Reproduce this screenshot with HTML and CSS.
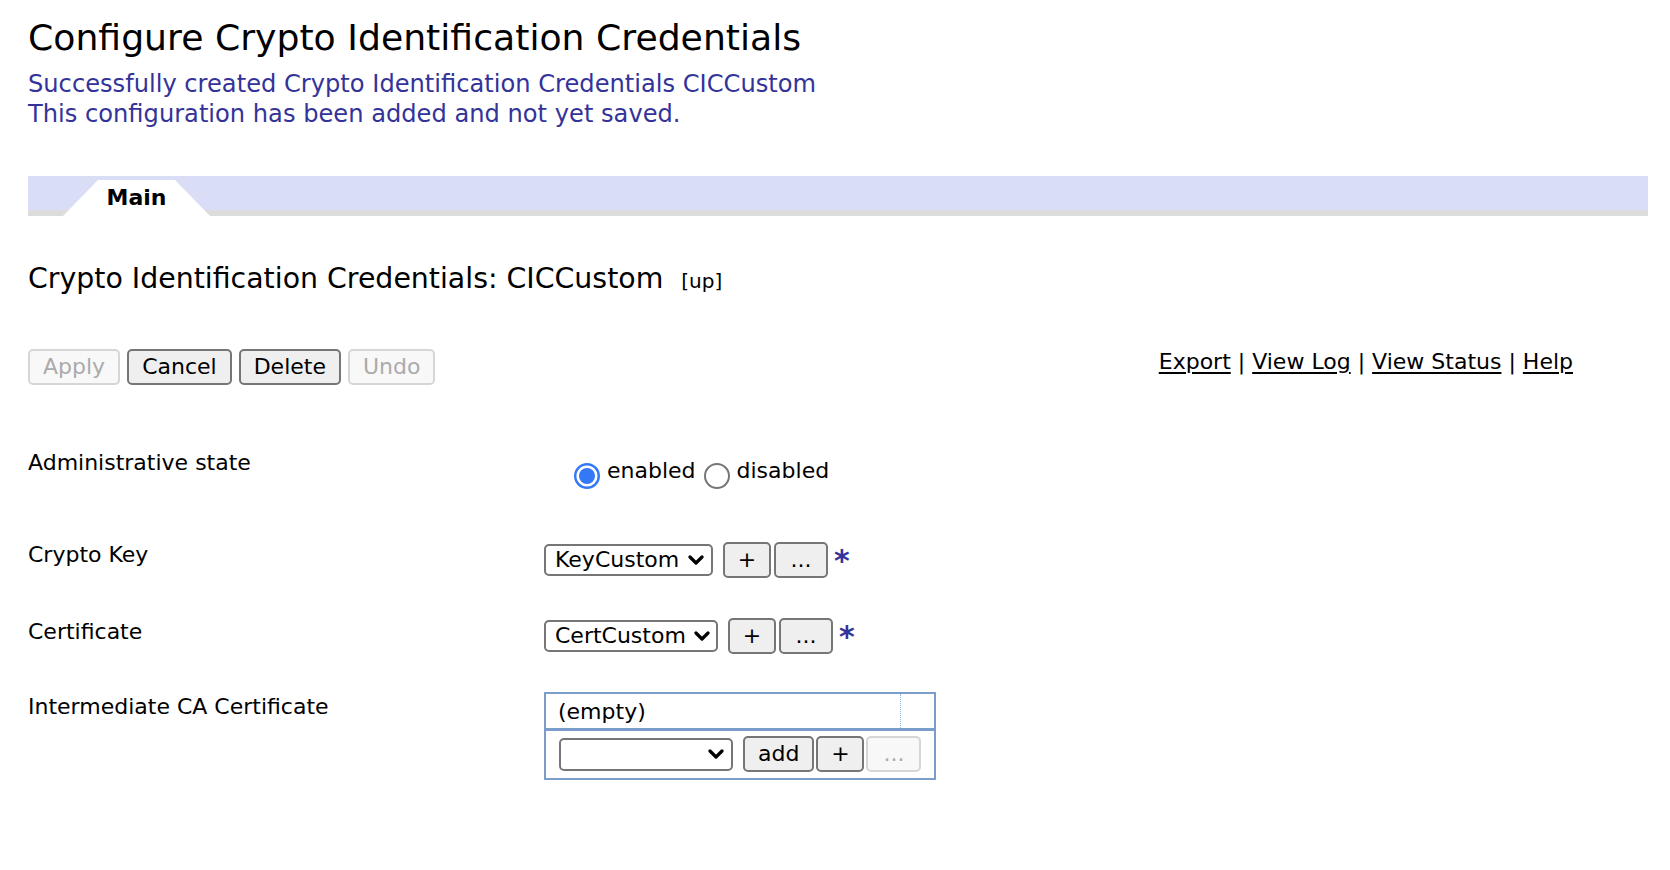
FILE: index.html
```html
<!DOCTYPE html>
<html lang="en">
<head>
<meta charset="utf-8">
<title>Configure Crypto Identification Credentials</title>
<link rel="stylesheet" href="styles.css">
</head>
<body>
<div class="page">
  <h1 class="title">Configure Crypto Identification Credentials</h1>
  <div class="msgs">
    <div>Successfully created Crypto Identification Credentials CICCustom</div>
    <div>This configuration has been added and not yet saved.</div>
  </div>

  <div class="tabbar">
    <div class="tab">Main</div>
  </div>

  <h2 class="heading">Crypto Identification Credentials: CICCustom<span class="up">[up]</span></h2>

  <div class="toolbar">
    <div class="btns">
      <button class="btn btn-disabled" disabled>Apply</button>
      <button class="btn">Cancel</button>
      <button class="btn">Delete</button>
      <button class="btn btn-disabled" disabled>Undo</button>
    </div>
    <div class="links">
      <a href="#">Export</a><span class="sep">|</span><a href="#">View Log</a><span class="sep">|</span><a href="#">View Status</a><span class="sep">|</span><a href="#">Help</a>
    </div>
  </div>

  <div class="form">
    <div class="row row-admin">
      <div class="label">Administrative state</div>
      <div class="ctrl radios">
        <label class="radio-opt first">
          <svg class="radio" width="26" height="26" viewBox="0 0 26 26"><circle cx="13" cy="13" r="11.8" fill="#fff" stroke="#3478f6" stroke-width="2.4"/><circle cx="13" cy="13" r="8" fill="#3478f6"/></svg>
          <span>enabled</span>
        </label>
        <label class="radio-opt second">
          <svg class="radio" width="26" height="26" viewBox="0 0 26 26"><circle cx="13" cy="13" r="12" fill="#fff" stroke="#767676" stroke-width="2"/></svg>
          <span>disabled</span>
        </label>
      </div>
    </div>

    <div class="row row-key">
      <div class="label">Crypto Key</div>
      <div class="ctrl group">
        <div class="select w-key"><span class="val">KeyCustom</span><svg class="chev" width="16" height="10" viewBox="0 0 16 10"><path d="M2 2 L8 8 L14 2" fill="none" stroke="#000" stroke-width="3.2" stroke-linecap="round" stroke-linejoin="round"/></svg></div>
        <button class="btn plus">+</button>
        <button class="btn dots">...</button>
        <span class="req">*</span>
      </div>
    </div>

    <div class="row row-cert">
      <div class="label">Certificate</div>
      <div class="ctrl group">
        <div class="select w-cert"><span class="val">CertCustom</span><svg class="chev" width="16" height="10" viewBox="0 0 16 10"><path d="M2 2 L8 8 L14 2" fill="none" stroke="#000" stroke-width="3.2" stroke-linecap="round" stroke-linejoin="round"/></svg></div>
        <button class="btn plus">+</button>
        <button class="btn dots">...</button>
        <span class="req">*</span>
      </div>
    </div>

    <div class="row row-ica">
      <div class="label">Intermediate CA Certificate</div>
      <div class="ctrl mlist">
        <div class="mrow-list">
          <div class="mcell-main">(empty)</div>
          <div class="mcell-side"></div>
        </div>
        <div class="mrow-add">
          <div class="select w-empty"><span class="val"></span><svg class="chev" width="16" height="10" viewBox="0 0 16 10"><path d="M2 2 L8 8 L14 2" fill="none" stroke="#000" stroke-width="3.2" stroke-linecap="round" stroke-linejoin="round"/></svg></div>
          <button class="btn add">add</button>
          <button class="btn plus">+</button>
          <button class="btn dots btn-disabled" disabled>...</button>
        </div>
      </div>
    </div>
  </div>
</div>
</body>
</html>
```

FILE: styles.css
```css
* {
  box-sizing: border-box;
}

html,
body {
  margin: 0;
  padding: 0;
  background: #ffffff;
}

body {
  font-family: "DejaVu Sans", Verdana, sans-serif;
  font-size: 22px;
  line-height: 26px;
  color: #000000;
}

.page {
  padding: 0 22px 0 28px;
}

.title {
  margin: 17px 0 0;
  font-size: 36.2px;
  line-height: 42px;
  font-weight: normal;
}

.msgs {
  margin-top: 10px;
  color: #333399;
  font-size: 24.15px;
  line-height: 30px;
}

.tabbar {
  margin-top: 47px;
  height: 40px;
  background: linear-gradient(#d9ddf6 0, #d9ddf6 34px, #dcdcdc 34px, #dcdcdc 40px);
  display: flex;
  align-items: flex-end;
}

.tab {
  margin-left: 35px;
  width: 147px;
  height: 36px;
  padding-top: 5px;
  background: #ffffff;
  clip-path: polygon(35px 0, 112px 0, 147px 100%, 0 100%);
  text-align: center;
  font-weight: bold;
  font-size: 22px;
  line-height: 26px;
}

.heading {
  margin: 46px 0 0;
  font-size: 28.4px;
  line-height: 34px;
  font-weight: normal;
}

.up {
  margin-left: 18px;
  font-size: 20px;
  line-height: 20px;
}

.toolbar {
  margin-top: 53px;
  display: flex;
  justify-content: space-between;
  align-items: flex-start;
}

.btns {
  display: flex;
  gap: 7px;
}

.btn {
  height: 36px;
  padding: 0 13px;
  border: 2px solid #767676;
  border-radius: 5px;
  background: #efefef;
  font-family: inherit;
  font-size: 22px;
  line-height: 26px;
  color: #000000;
  margin: 0;
}

.btn-disabled {
  border-color: #d6d6d6;
  background: #f8f8f8;
  color: #ababab;
}

.links {
  margin-right: 75px;
  line-height: 26px;
  display: flex;
}

.links a {
  color: #000000;
  text-decoration: underline;
  text-underline-offset: 3px;
  text-decoration-thickness: 1.5px;
}

.sep {
  padding: 0 7px;
}

.form {
  margin-top: 65px;
}

.row {
  display: flex;
  align-items: flex-start;
}

.label {
  width: 516px;
  flex: none;
}

.ctrl {
  flex: none;
}

.radios {
  display: flex;
  padding-top: 8px;
}

.radio-opt {
  display: flex;
  align-items: flex-start;
}

.radio-opt.first {
  margin-left: 30px;
}

.radio-opt.second {
  margin-left: 8px;
}

.radio {
  margin-top: 5px;
  margin-right: 7px;
  flex: none;
}

.row-key {
  margin-top: 53px;
}

.row-cert {
  margin-top: 40px;
}

.row-cert .label {
  padding-top: 1px;
}

.row-ica {
  margin-top: 38px;
}

.row-ica .label {
  padding-top: 2px;
}

.group {
  display: flex;
  align-items: center;
}

.select {
  display: flex;
  align-items: center;
  height: 32px;
  border: 2px solid #767676;
  border-radius: 5px;
  padding: 0 7px 0 9px;
  background: #ffffff;
  flex: none;
}

.select .val {
  flex: 1;
  white-space: nowrap;
}

.chev {
  flex: none;
  margin-left: 8px;
}

.w-key {
  width: 169px;
}

.w-cert {
  width: 174px;
}

.w-empty {
  width: 174px;
  height: 33px;
}

.group .select {
  margin-right: 10px;
}

.plus {
  width: 48px;
  padding: 0;
}

.dots {
  width: 54px;
  padding: 0;
}

.group .plus {
  margin-right: 3px;
}

.req {
  align-self: flex-start;
  margin-left: 6px;
  margin-top: 4px;
  color: #333399;
  font-weight: bold;
  font-size: 30px;
  line-height: 30px;
}

.mlist {
  width: 392px;
  border: 2px solid #7b9dcb;
}

.mrow-list {
  display: flex;
  height: 37px;
  border-bottom: 3px solid #7b9dcb;
}

.mcell-main {
  flex: 1;
  padding: 5px 0 0 12px;
}

.mcell-side {
  width: 34px;
  border-left: 1px dotted #8fb8ea;
}

.mrow-add {
  display: flex;
  align-items: center;
  height: 47px;
  padding: 5px 0 6px 13px;
}

.mrow-add .select {
  margin-right: 10px;
}

.add {
  margin-right: 2px;
}

.mrow-add .plus {
  margin-right: 2px;
}

.mrow-add .dots {
  width: 55px;
}
```
